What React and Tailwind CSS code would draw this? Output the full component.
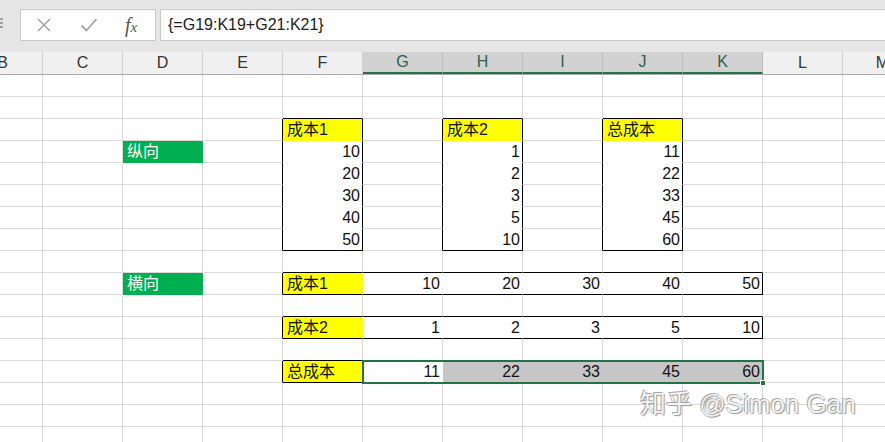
import React from 'react';

const COLS = ['B', 'C', 'D', 'E', 'F', 'G', 'H', 'I', 'J', 'K', 'L', 'M'];
const SELECTED_COLS = ['G', 'H', 'I', 'J', 'K'];
const ROWS = 17;

// boxed ranges: [rowStart, rowEnd, colStart, colEnd] (inclusive)
const BOXES = [
  [2, 7, 4, 4],
  [2, 7, 6, 6],
  [2, 7, 8, 8],
  [9, 9, 4, 9],
  [11, 11, 4, 9],
  [13, 13, 4, 9],
];

const cells = {};
const put = (r, c, text, kind) => { cells[`${r}-${c}`] = { text, kind }; };

// 纵向 tables
put(2, 4, '成本1', 'yellow');
put(2, 6, '成本2', 'yellow');
put(2, 8, '总成本', 'yellow');
[[10, 1, 11], [20, 2, 22], [30, 3, 33], [40, 5, 45], [50, 10, 60]].forEach((v, i) => {
  put(3 + i, 4, v[0], 'num');
  put(3 + i, 6, v[1], 'num');
  put(3 + i, 8, v[2], 'num');
});
put(3, 2, '纵向', 'green');

// 横向 tables
put(9, 2, '横向', 'green');
put(9, 4, '成本1', 'yellow');
put(11, 4, '成本2', 'yellow');
put(13, 4, '总成本', 'yellow');
[10, 20, 30, 40, 50].forEach((v, i) => put(9, 5 + i, v, 'num'));
[1, 2, 3, 5, 10].forEach((v, i) => put(11, 5 + i, v, 'num'));
[11, 22, 33, 45, 60].forEach((v, i) => put(13, 5 + i, v, i === 0 ? 'num' : 'sel'));

const inBox = (r, c) => {
  for (let i = 0; i < BOXES.length; i++) {
    const [r0, r1, c0, c1] = BOXES[i];
    if (r >= r0 && r <= r1 && c >= c0 && c <= c1) return i;
  }
  return -1;
};

const fillOf = (kind) => {
  if (kind === 'yellow') return { bg: 'bg-[#ffff00]', br: 'border-r-[#ffff00]', bb: 'border-b-[#ffff00]' };
  if (kind === 'green') return { bg: 'bg-[#00b050]', br: 'border-r-[#00b050]', bb: 'border-b-[#00b050]' };
  if (kind === 'sel') return { bg: 'bg-[#c6c6c6]', br: 'border-r-[#c6c6c6]', bb: 'border-b-[#c6c6c6]' };
  return { bg: 'bg-white', br: 'border-r-white', bb: 'border-b-white' };
};

const Cell = ({ r, c }) => {
  const cell = cells[`${r}-${c}`];
  const kind = cell ? cell.kind : null;
  const box = inBox(r, c);
  const right = inBox(r, c + 1);
  const below = inBox(r + 1, c);
  const f = fillOf(kind);
  const filled = box >= 0 || kind === 'green';

  let br = 'border-r-[#d9d9d9]';
  if (box !== right && (box >= 0 || right >= 0)) br = 'border-r-black';
  else if (filled) br = f.br;

  let bb = 'border-b-[#d9d9d9]';
  if (box !== below && (box >= 0 || below >= 0)) bb = 'border-b-black';
  else if (filled) bb = f.bb;

  const isNum = kind === 'num' || kind === 'sel';
  return (
    <div
      className={`h-[22px] border-r border-b ${br} ${bb} ${filled ? f.bg : 'bg-white'} leading-[22px] text-[16px] whitespace-nowrap overflow-hidden ${isNum ? 'text-right pr-[2px]' : 'pl-[4px]'} ${kind === 'green' ? 'text-white' : 'text-[#111]'}`}
    >
      {cell ? cell.text : ''}
    </div>
  );
};

const XIcon = () => (
  <svg width="16" height="16" viewBox="0 0 16 16">
    <path d="M2 2 L14 14 M14 2 L2 14" stroke="#a6a6a6" strokeWidth="1.6" fill="none" />
  </svg>
);

const CheckIcon = () => (
  <svg width="18" height="16" viewBox="0 0 18 16">
    <path d="M1.5 8.5 L6.5 13.5 L16.5 2" stroke="#a6a6a6" strokeWidth="1.8" fill="none" />
  </svg>
);

export default function App() {
  return (
    <div className="w-[885px] h-[442px] overflow-hidden bg-white relative" style={{ fontFamily: '"Liberation Sans", "Noto Sans CJK SC", sans-serif' }}>
      {/* formula bar */}
      <div className="h-[52px] bg-[#e6e6e6] flex items-start pt-[9px] relative">
        <div className="w-[20px] flex flex-col items-start gap-[2px] pt-[9px]">
          <span className="block w-[3px] h-[2px] bg-[#a0a0a0]" />
          <span className="block w-[3px] h-[2px] bg-[#a0a0a0]" />
          <span className="block w-[3px] h-[2px] bg-[#a0a0a0]" />
        </div>
        <div className="w-[136px] h-[32px] bg-white border border-[#c8c8c8] flex items-center">
          <div className="w-[44px] flex justify-center pl-[2px]"><XIcon /></div>
          <div className="w-[46px] flex justify-center pl-[2px]"><CheckIcon /></div>
          <div className="flex-1 flex items-baseline justify-center pr-[4px] text-[#555] italic" style={{ fontFamily: '"Liberation Serif", serif' }}>
            <span className="text-[20px] leading-none">f</span>
            <span className="text-[15px] leading-none">x</span>
          </div>
        </div>
        <div className="ml-[4px] flex-1 h-[32px] bg-white border border-r-0 border-[#c8c8c8] flex items-center pl-[7px] text-[16px] text-[#222]">
          {'{=G19:K19+G21:K21}'}
        </div>
      </div>

      {/* sheet */}
      <div className="ml-[-37px] w-[960px]">
        <div className="grid grid-cols-[repeat(12,80px)] h-[23px] border-b border-[#ababab] bg-[#f0f0f0]">
          {COLS.map((col) => {
            const sel = SELECTED_COLS.includes(col);
            return (
              <div
                key={col}
                className={`h-[22px] flex items-center justify-center text-[16px] border-r ${sel ? 'bg-[#d2d2d2] text-[#2f5f47] border-r-[#bdbdbd] border-b-2 border-b-[#217346]' : 'text-[#333] border-r-[#d0d0d0]'}`}
              >
                {col}
              </div>
            );
          })}
        </div>
        <div className="grid grid-cols-[repeat(12,80px)]">
          {Array.from({ length: ROWS }).map((_, r) =>
            COLS.map((col, c) => <Cell key={`${r}-${c}`} r={r} c={c} />)
          )}
        </div>
      </div>

      {/* selection G21:K21 */}
      <div className="absolute left-[362px] top-[360px] w-[402px] h-[24px] border-2 border-[#217346] pointer-events-none" />
      <div className="absolute left-[760px] top-[380px] w-[6px] h-[6px] bg-[#217346] border border-white pointer-events-none" />

      {/* watermark */}
      <div
        className="absolute left-[640px] top-[389px] text-[26px] leading-[30px] text-[#f4f4f4] whitespace-nowrap [text-shadow:0_0_1px_#8a8a8a,1px_1px_1px_#9a9a9a,-1px_-1px_0_#b0b0b0]"
      >
        知乎 @Simon Gan
      </div>
    </div>
  );
}
